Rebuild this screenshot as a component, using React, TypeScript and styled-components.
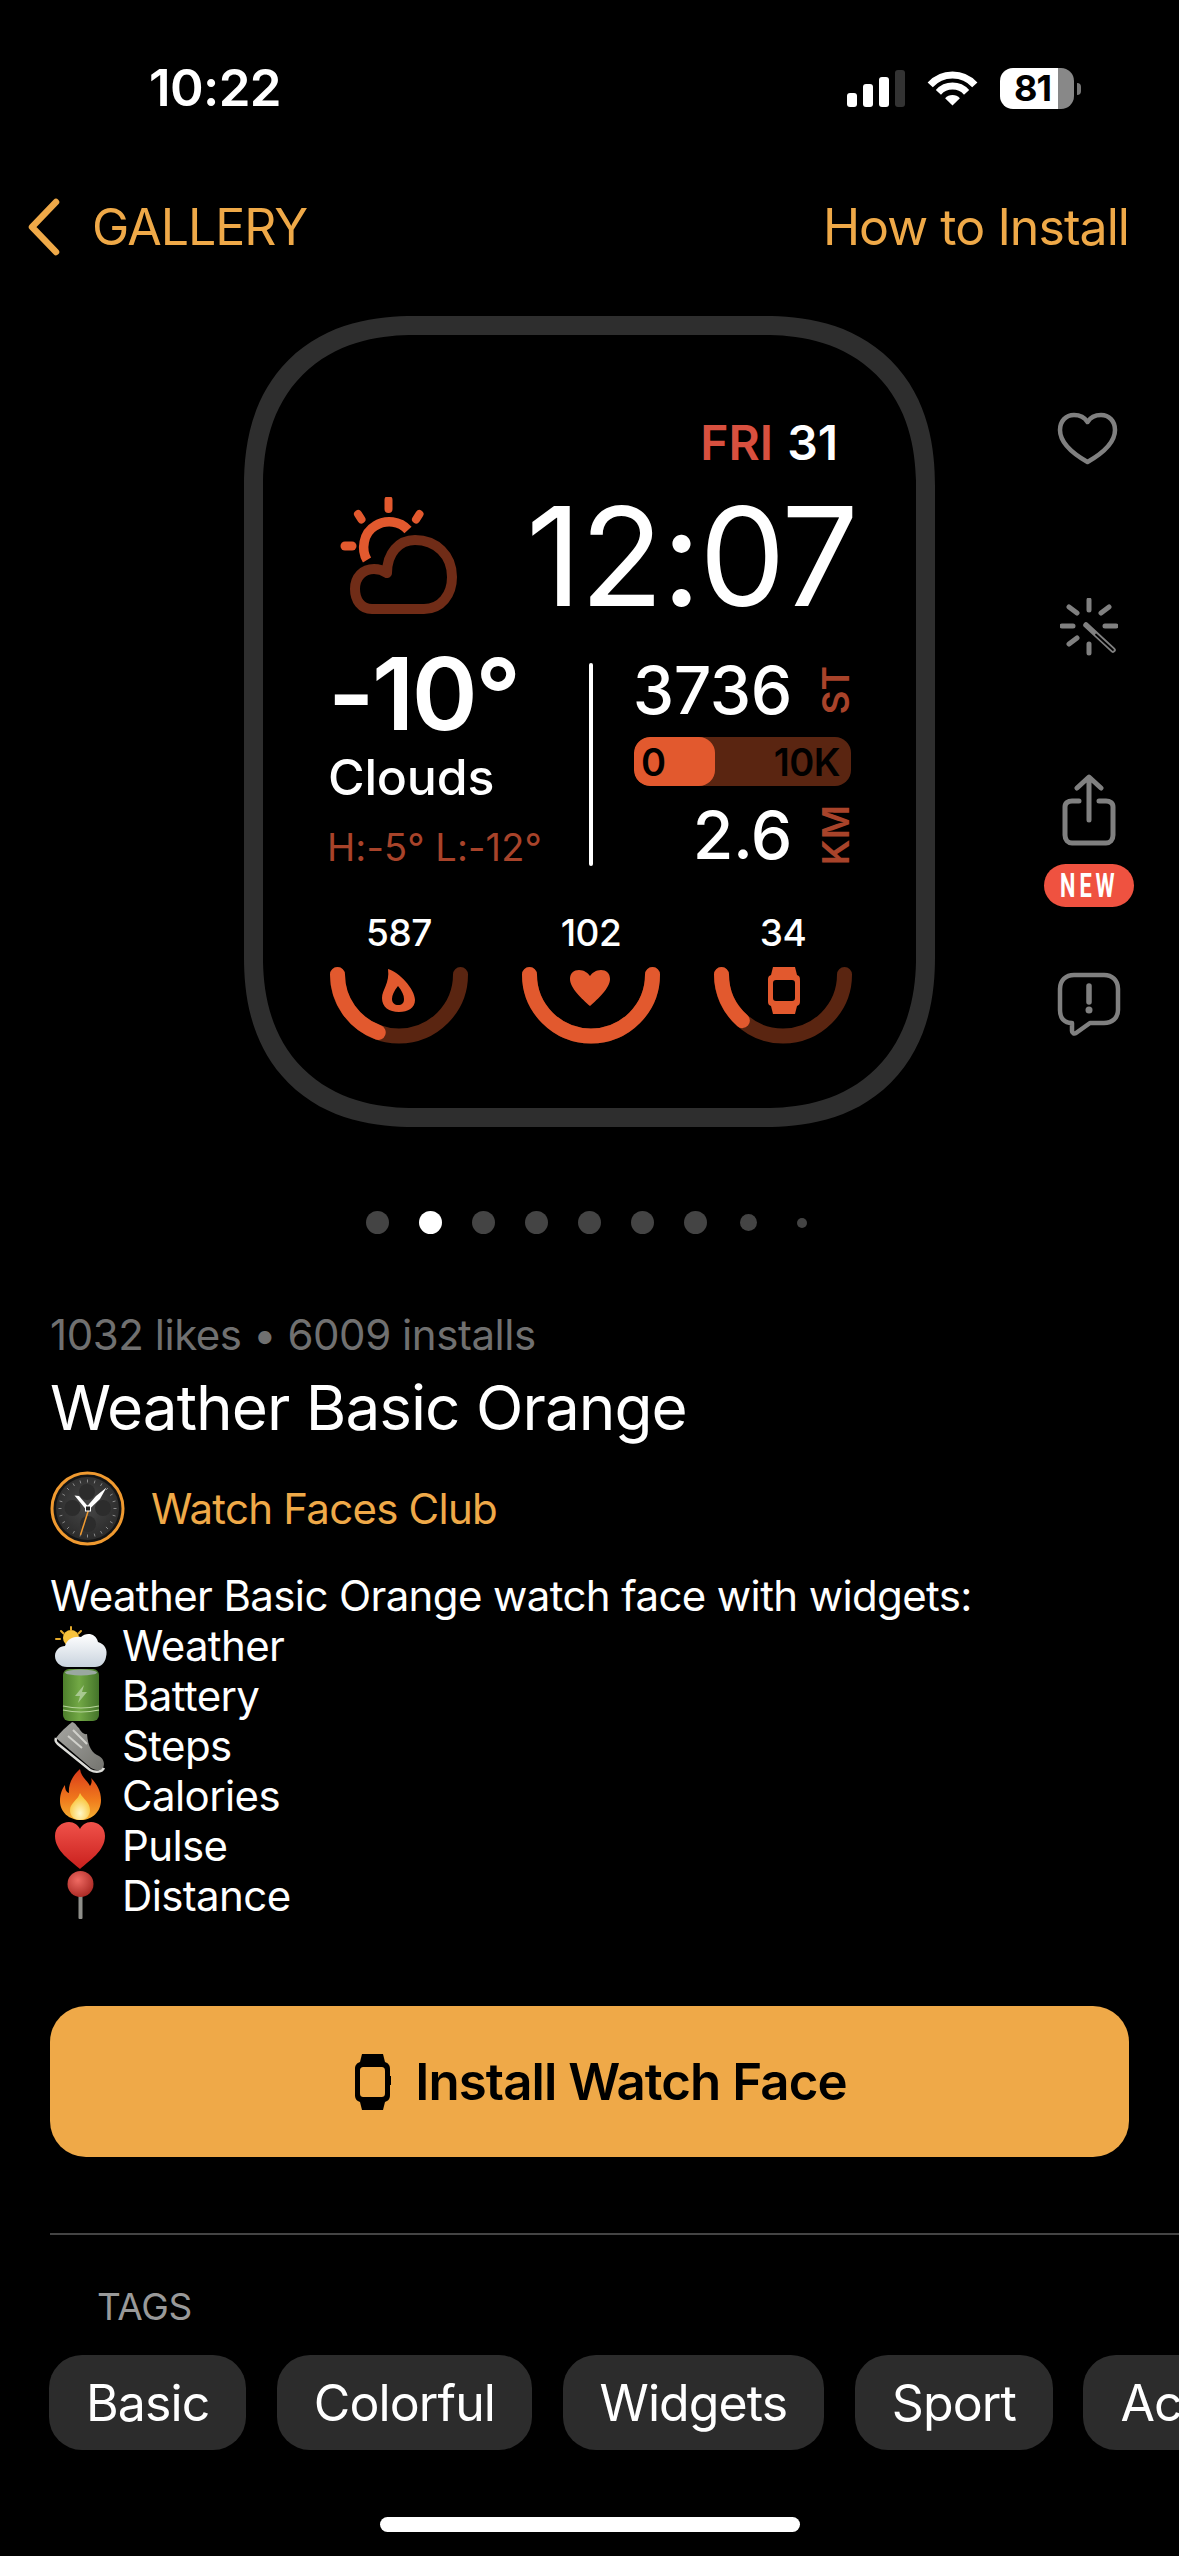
import * as React from "react";
import styled, { createGlobalStyle } from "styled-components";

const FONT = `Inter, "Liberation Sans", sans-serif`;
const ORANGE = "#efa948";
const EMBER = "#e2592e";
const EMBER_DARK = "#5a2511";
const RUST = "#a8432a";
const ICON_GREY = "#808080";

const Global = createGlobalStyle`
  html, body {
    margin: 0;
    background: #000;
  }
  * {
    box-sizing: border-box;
  }
`;

const Page = styled.div`
  width: 1179px;
  height: 2556px;
  background: #000;
  color: #fff;
  font-family: ${FONT};
  overflow: hidden;
  display: flex;
  flex-direction: column;
`;

const StatusBar = styled.div`
  height: 176px;
  flex: none;
  display: flex;
  align-items: center;
  justify-content: space-between;
  padding: 0 105px 0 149px;
`;
const Clock = styled.div`
  font-size: 51px;
  font-weight: 600;
  letter-spacing: -0.6px;
  line-height: 60px;
`;
const StatusIcons = styled.div`
  display: flex;
  align-items: center;
  gap: 22px;
`;
const Signal = styled.div`
  display: flex;
  align-items: flex-end;
  gap: 6px;
  height: 38px;
`;
const SignalBar = styled.div<{ $h: number; $off?: boolean }>`
  width: 10px;
  height: ${(p) => p.$h}px;
  border-radius: 3px;
  background: ${(p) => (p.$off ? "#333" : "#fff")};
`;
const Battery = styled.div`
  position: relative;
  width: 74px;
  height: 41px;
  border-radius: 13px;
  background: linear-gradient(90deg, #fff 0 78%, #888 78% 100%);
  color: #000;
  font-size: 36px;
  font-weight: 700;
  letter-spacing: -1px;
  line-height: 41px;
  padding-left: 14px;
  &::after {
    content: "";
    position: absolute;
    left: 77px;
    top: 15px;
    width: 4px;
    height: 12px;
    border-radius: 0 4px 4px 0;
    background: #777;
  }
`;

const NavBar = styled.div`
  height: 102px;
  flex: none;
  display: flex;
  align-items: center;
  justify-content: space-between;
  padding: 0 50px 0 28px;
  color: ${ORANGE};
  font-size: 50px;
  line-height: 60px;
`;
const BackLink = styled.div`
  display: flex;
  align-items: center;
  gap: 32px;
  letter-spacing: -1px;
`;
const NavLink = styled.div`
  letter-spacing: -0.95px;
`;

const Hero = styled.div`
  flex: none;
  margin-top: 38px;
  display: grid;
  grid-template-columns: 244px 691px 1fr;
`;
const WatchFrame = styled.div`
  grid-column: 2;
  height: 811px;
  border: 19px solid #2e2e2e;
  border-radius: 170px;
  corner-shape: superellipse(1.2);
  padding: 84px 64px 0 67px;
  display: flex;
  flex-direction: column;
`;
const DateRow = styled.div`
  display: flex;
  justify-content: flex-end;
  gap: 14px;
  padding-right: 14px;
  font-size: 48px;
  font-weight: 600;
  line-height: 48px;
`;
const DayName = styled.span`
  color: #d8503f;
`;
const TimeRow = styled.div`
  margin-top: 29px;
  margin-right: -5px;
  height: 120px;
  display: flex;
  align-items: center;
  justify-content: space-between;
  padding-left: 10px;
`;
const WatchTime = styled.div`
  font-size: 137px;
  font-weight: 400;
  line-height: 120px;
  letter-spacing: -1.8px;
`;
const StatsRow = styled.div`
  margin-top: 28px;
  display: flex;
  align-items: flex-start;
`;
const WeatherCol = styled.div`
  width: 259px;
  flex: none;
  display: flex;
  flex-direction: column;
`;
const Temp = styled.div`
  margin-left: -2px;
  font-size: 100px;
  font-weight: 600;
  line-height: 100px;
  letter-spacing: -2.5px;
`;
const Condition = styled.div`
  margin: 8px 0 0 -2px;
  font-size: 50px;
  font-weight: 500;
  line-height: 50px;
  letter-spacing: -0.2px;
`;
const HighLow = styled.div`
  margin: 25px 0 0 -3px;
  font-size: 38px;
  line-height: 40px;
  color: ${RUST};
  letter-spacing: 0.1px;
  white-space: nowrap;
`;
const Divider = styled.div`
  margin-top: 19px;
  width: 4px;
  height: 203px;
  border-radius: 2px;
  background: #fff;
  flex: none;
`;
const ActivityCol = styled.div`
  margin-left: 41px;
  width: 217px;
  flex: none;
  padding-top: 16px;
  display: flex;
  flex-direction: column;
`;
const MetricRow = styled.div`
  display: flex;
  justify-content: flex-end;
  align-items: center;
  gap: 30px;
  height: 60px;
  padding-right: 2px;
`;
const MetricValue = styled.div`
  font-size: 66px;
  font-weight: 500;
  line-height: 60px;
  letter-spacing: -0.4px;
`;
const MetricUnit = styled.div`
  writing-mode: vertical-rl;
  transform: rotate(180deg);
  font-size: 37px;
  font-weight: 600;
  line-height: 27px;
  width: 27px;
  text-align: center;
  color: ${RUST};
`;
const StepBar = styled.div`
  margin: 17px 0 19px;
  height: 49px;
  border-radius: 16px;
  background: ${EMBER_DARK};
  position: relative;
  overflow: hidden;
  display: flex;
  align-items: center;
  justify-content: space-between;
  padding: 0 11px 0 7px;
  color: #000;
  font-size: 38px;
  font-weight: 600;
  letter-spacing: -0.5px;
`;
const StepFill = styled.div`
  position: absolute;
  left: 0;
  top: 0;
  bottom: 0;
  border-radius: 16px;
  background: ${EMBER};
`;
const StepLabel = styled.span`
  position: relative;
`;
const GaugeRow = styled.div`
  margin-top: 46px;
  display: flex;
  gap: 54px;
`;
const GaugeCell = styled.div`
  width: 138px;
  flex: none;
  display: flex;
  flex-direction: column;
  align-items: center;
  gap: 14px;
`;
const GaugeLabel = styled.div`
  font-size: 37px;
  font-weight: 500;
  line-height: 40px;
  letter-spacing: -0.5px;
`;

const SideRail = styled.div`
  position: relative;
`;
const RailButton = styled.div<{ $x: number; $y: number }>`
  position: absolute;
  left: ${(p) => p.$x}px;
  top: ${(p) => p.$y}px;
  display: flex;
`;
const NewPill = styled.div`
  position: absolute;
  left: 109px;
  top: 547.5px;
  width: 90px;
  height: 43px;
  border-radius: 22px;
  background: #ef5240;
  display: flex;
  align-items: center;
  justify-content: center;
`;
const NewLabel = styled.span`
  color: #fff;
  font-family: Roboto, sans-serif;
  font-size: 33px;
  font-weight: 700;
  letter-spacing: 6px;
  line-height: 43px;
  white-space: nowrap;
  transform: scaleX(0.66);
`;

const Dots = styled.div`
  flex: none;
  margin-top: 84px;
  height: 23px;
  display: flex;
  justify-content: center;
  gap: 30px;
`;
const DotSlot = styled.div`
  width: 23px;
  height: 23px;
  display: flex;
  align-items: center;
  justify-content: center;
`;
const Dot = styled.div<{ $size: number; $active?: boolean }>`
  width: ${(p) => p.$size}px;
  height: ${(p) => p.$size}px;
  border-radius: 50%;
  background: ${(p) => (p.$active ? "#fff" : "#444")};
`;

const Details = styled.div`
  flex: none;
  padding: 0 50px;
  display: flex;
  flex-direction: column;
`;
const Meta = styled.div`
  margin-top: 76px;
  font-size: 42px;
  line-height: 50px;
  color: #707070;
  letter-spacing: -0.45px;
`;
const Title = styled.div`
  margin-top: 13px;
  font-size: 62px;
  line-height: 70px;
  letter-spacing: -0.95px;
`;
const Author = styled.div`
  margin-top: 28px;
  height: 75px;
  display: flex;
  align-items: center;
  gap: 26px;
  color: ${ORANGE};
  font-size: 42px;
  letter-spacing: -0.75px;
  line-height: 72px;
`;
const Description = styled.div`
  margin-top: 25px;
  font-size: 42px;
  line-height: 50px;
  letter-spacing: -0.62px;
`;
const FeatureRow = styled.div`
  display: flex;
  align-items: center;
  height: 50px;
  gap: 17px;
`;
const EmojiBox = styled.svg`
  width: 55px;
  height: 52px;
  margin-top: 2px;
  flex: none;
  overflow: visible;
`;
const InstallButton = styled.div`
  margin-top: 85px;
  height: 151px;
  border-radius: 36px;
  background: ${ORANGE};
  color: #000;
  display: flex;
  align-items: center;
  justify-content: center;
  gap: 24px;
  padding-left: 22px;
  font-size: 51px;
  font-weight: 600;
  letter-spacing: -0.95px;
`;
const Rule = styled.div`
  flex: none;
  margin: 76px 0 0 50px;
  height: 2px;
  background: #444;
`;
const TagsHeading = styled.div`
  flex: none;
  margin: 52px 0 0 97px;
  font-size: 37px;
  line-height: 40px;
  color: #999;
  letter-spacing: -0.4px;
`;
const TagList = styled.div`
  flex: none;
  margin-top: 28px;
  padding-left: 49px;
  display: flex;
  gap: 30.5px;
  white-space: nowrap;
`;
const Tag = styled.div`
  flex: none;
  height: 95px;
  border-radius: 33px;
  padding: 0 37px;
  background: #2c2c2c;
  display: flex;
  align-items: center;
  font-size: 50px;
  letter-spacing: -0.9px;
`;
const HomeBar = styled.div`
  flex: none;
  align-self: center;
  margin-top: 67px;
  width: 420px;
  height: 15px;
  border-radius: 8px;
  background: #fff;
`;

function WeatherGlyph() {
  return (
    <svg width="118" height="118" viewBox="340 497 118 118" fill="none" strokeLinecap="round">
      <path d="M367 560C361 550 363 533 375 526C386 519 400 521 408 530" stroke={EMBER} strokeWidth="9.5" strokeLinecap="butt" />
      <path d="M388.500 500V509" stroke={EMBER} strokeWidth="8" />
      <path d="M358 514L361.500 519.500M419.500 514L416 519.500" stroke={EMBER} strokeWidth="8" />
      <path d="M345 546H352" stroke={EMBER} strokeWidth="9" />
      <path
        d="M372 609C361 609 355 600 355 589C355 577 363 569 374 569C379 569 384 571 387 573C387 553 399 540 415 540C436 540 452 555 452 577C452 595 441 609 424 609Z"
        stroke="#702c17"
        strokeWidth="10"
        strokeLinejoin="round"
      />
    </svg>
  );
}

function Gauge({ value, icon }: { value: number; icon: React.ReactNode }) {
  const arc = "M7.500 7.500A61.500 61.500 0 0 0 130.500 7.500";
  return (
    <svg width="138" height="78" viewBox="0 0 138 78" fill="none">
      <path d={arc} stroke={EMBER_DARK} strokeWidth="15" strokeLinecap="round" />
      <path d={arc} stroke={EMBER} strokeWidth="15" strokeLinecap="round" pathLength={100} strokeDasharray={`${value} 200`} />
      {icon}
    </svg>
  );
}

const FlameIcon = (
  <path
    fill={EMBER}
    fillRule="evenodd"
    d="M58 2C69 5 85 22 85 33C85 41 78 45 69 45C59 45 52 40 52 31C52 23 60 16 58 2ZM68 19C64 24 62 28 62 32C62 36 65 38 68 38C72 38 74 36 74 32C74 28 72 24 68 19Z"
  />
);
const HeartIcon = (
  <path
    fill={EMBER}
    d="M68 39C60 32 48 21 48 12C48 6 52 3 57 3C62 3 66 6 68 9C70 6 74 3 79 3C84 3 88 6 88 12C88 21 76 32 68 39Z"
  />
);
const WatchIcon = (
  <path
    fill={EMBER}
    fillRule="evenodd"
    d="M59 0H81L83 8C86 9 86 11 86 14V33C86 36 86 38 83 39L81 47H59L57 39C54 38 54 36 54 33V14C54 11 54 9 57 8ZM62 13C60 13 59 14 59 16V31C59 33 60 34 62 34H78C80 34 81 33 81 31V16C81 14 80 13 78 13Z"
  />
);

function Emoji({ children }: { children: React.ReactNode }) {
  return <EmojiBox viewBox="-5 0 55 52">{children}</EmojiBox>;
}

function CloudEmoji() {
  return (
    <Emoji>
      <defs>
        <linearGradient id="cloudFill" x1="0" y1="0" x2="0" y2="1">
          <stop offset="0" stopColor="#fff" />
          <stop offset="1" stopColor="#c9d3de" />
        </linearGradient>
      </defs>
      <circle cx="16" cy="17" r="8" fill="#f7c23c" />
      <path d="M16 6V9M6 10L8.500 12.500M26 10L23.500 12.500M1 18H5" stroke="#e3a92c" strokeWidth="2" strokeLinecap="round" />
      <path
        fill="url(#cloudFill)"
        d="M12 46C5 46 0 41 0 35C0 29 5 25 10 25C12 18 19 15 26 16C31 11 41 12 43 21C50 23 53 29 51 36C50 42 46 46 40 46Z"
      />
    </Emoji>
  );
}

function BatteryEmoji() {
  return (
    <Emoji>
      <defs>
        <linearGradient id="cellFill" x1="0" y1="0" x2="1" y2="0">
          <stop offset="0" stopColor="#4d7f2c" />
          <stop offset="0.45" stopColor="#72a845" />
          <stop offset="1" stopColor="#44742a" />
        </linearGradient>
      </defs>
      <rect x="8" y="-2" width="36" height="52" rx="6" fill="url(#cellFill)" />
      <ellipse cx="26" cy="1.500" rx="16" ry="3" fill="#9aa8a0" />
      <path d="M8 35Q26 39 44 35M8 39Q26 43 44 39" stroke="#b6d49a" strokeWidth="1.200" fill="none" />
      <path d="M29 14L20 25H25L23 32L32 21H27Z" fill="#a8c890" />
    </Emoji>
  );
}

function ShoeEmoji() {
  return (
    <Emoji>
      <defs>
        <linearGradient id="shoeFill" x1="0" y1="0" x2="1" y2="1">
          <stop offset="0" stopColor="#a6a6a2" />
          <stop offset="1" stopColor="#74746f" />
        </linearGradient>
      </defs>
      <path fill="url(#shoeFill)" d="M17 1C14 4 9 7 1 17L36 47C42 50 46 50 48 47C50 43 49 38 44 35C37 32 33 26 32 13C29 14 25 10 24 7C22 6 21 2 17 1Z" />
      <path d="M1 17C0 20 1 21 3 23L35 49C41 52 47 51 49 47" stroke="#dcdcd8" strokeWidth="2.500" fill="none" />
      <path d="M13 15L27 27M18 9L32 23" stroke="#d0d0cb" strokeWidth="2" />
    </Emoji>
  );
}

function FireEmoji() {
  return (
    <Emoji>
      <defs>
        <linearGradient id="fireFill" x1="0" y1="0" x2="0" y2="1">
          <stop offset="0" stopColor="#d9391a" />
          <stop offset="0.6" stopColor="#f07a1c" />
          <stop offset="1" stopColor="#f6b233" />
        </linearGradient>
        <radialGradient id="fireCore" cx="0.5" cy="0.75" r="0.6">
          <stop offset="0" stopColor="#fff8c8" />
          <stop offset="1" stopColor="#f9c53c" />
        </radialGradient>
      </defs>
      <g transform="translate(-1 -2)">
        <path
          fill="url(#fireFill)"
          d="M26 0C27 8 33 11 36 17C38 14 38 11 37 9C43 15 47 22 47 31C47 43 38 51 27 51C15 51 6 43 6 32C6 25 8 20 11 16C11 20 12 23 15 24C14 15 19 6 26 0Z"
        />
        <path fill="url(#fireCore)" d="M26 24C29 30 36 33 36 41C36 47 32 51 26 51C20 51 16 47 16 41C16 34 24 31 26 24Z" />
      </g>
    </Emoji>
  );
}

function HeartEmoji() {
  return (
    <Emoji>
      <defs>
        <linearGradient id="heartFill" x1="0" y1="0" x2="0" y2="1">
          <stop offset="0" stopColor="#f0524a" />
          <stop offset="1" stopColor="#c9201d" />
        </linearGradient>
      </defs>
      <path
        fill="url(#heartFill)"
        d="M25 48C16 40 0 30 0 15C0 6 7 1 14 1C19 1 23 4 25 8C27 4 31 1 36 1C43 1 50 6 50 15C50 30 34 40 25 48Z"
      />
    </Emoji>
  );
}

function PinEmoji() {
  return (
    <Emoji>
      <defs>
        <radialGradient id="pinFill" cx="0.4" cy="0.35" r="0.7">
          <stop offset="0" stopColor="#ef6a62" />
          <stop offset="1" stopColor="#a82722" />
        </radialGradient>
      </defs>
      <rect x="23.500" y="22" width="4" height="26" rx="1" fill="#8f8f8a" />
      <circle cx="25.500" cy="13" r="13" fill="url(#pinFill)" />
    </Emoji>
  );
}

const avatarTicks = Array.from({ length: 24 }, (_, i) => (i * Math.PI * 2) / 24);

function AuthorAvatar() {
  return (
    <svg width="75" height="75" viewBox="0 0 75 75">
      <defs>
        <radialGradient id="faceFill" cx="0.5" cy="0.45" r="0.55">
          <stop offset="0" stopColor="#484848" />
          <stop offset="1" stopColor="#2b2b2b" />
        </radialGradient>
      </defs>
      <circle cx="37.500" cy="37.500" r="35.500" fill="#141414" stroke="#f09a30" strokeWidth="3" />
      <circle cx="37.500" cy="37.500" r="31.500" fill="url(#faceFill)" />
      <circle cx="37" cy="21" r="8" fill="#2c2c2c" />
      <circle cx="22.500" cy="37" r="8" fill="#2c2c2c" />
      <circle cx="53" cy="37" r="8" fill="#2c2c2c" />
      <circle cx="38" cy="53" r="8" fill="#2c2c2c" />
      {avatarTicks.map((a) => (
        <line
          key={a}
          x1={37.5 + Math.cos(a) * 26}
          y1={37.5 + Math.sin(a) * 26}
          x2={37.5 + Math.cos(a) * 29}
          y2={37.5 + Math.sin(a) * 29}
          stroke="#8a8a8a"
          strokeWidth="1"
        />
      ))}
      <polygon points="24.500,24.500 29,25 38.500,36 36,38.500" fill="#fff" />
      <polygon points="56.500,16.500 50,28 39,38.500 36.500,36 46,25" fill="#fff" />
      <path d="M38.500 39L30.500 64" stroke="#f09a30" strokeWidth="1.500" />
      <rect x="35.500" y="35" width="5" height="5" fill="#222" stroke="#fff" strokeWidth="1" />
    </svg>
  );
}

const tags = ["Basic", "Colorful", "Widgets", "Sport", "Activity"];
const features: [string, React.ReactNode][] = [
  ["Weather", <CloudEmoji />],
  ["Battery", <BatteryEmoji />],
  ["Steps", <ShoeEmoji />],
  ["Calories", <FireEmoji />],
  ["Pulse", <HeartEmoji />],
  ["Distance", <PinEmoji />],
];
const dotSizes = [23, 23, 23, 23, 23, 23, 23, 17, 10];

function App() {
  return (
    <Page>
      <Global />
      <StatusBar>
        <Clock>10:22</Clock>
        <StatusIcons>
          <Signal>
            <SignalBar $h={14} />
            <SignalBar $h={23} />
            <SignalBar $h={30} />
            <SignalBar $h={37} $off />
          </Signal>
          <svg width="51" height="38" viewBox="0 0 51 38" fill="none">
            <path d="M3.200 15.900A30 30 0 0 1 47.800 15.900" stroke="#fff" strokeWidth="7" />
            <path d="M11.400 23.300A19 19 0 0 1 39.600 23.300" stroke="#fff" strokeWidth="7" />
            <path d="M25.500 36.500L18.100 29.300A10 10 0 0 1 32.900 29.300Z" fill="#fff" />
          </svg>
          <Battery>81</Battery>
        </StatusIcons>
      </StatusBar>

      <NavBar>
        <BackLink>
          <svg width="32" height="58" viewBox="0 0 32 58" fill="none">
            <path d="M28 4L4 29L28 54" stroke={ORANGE} strokeWidth="6.500" strokeLinecap="round" strokeLinejoin="round" />
          </svg>
          GALLERY
        </BackLink>
        <NavLink>How to Install</NavLink>
      </NavBar>

      <Hero>
        <WatchFrame>
          <DateRow>
            <DayName>FRI</DayName>
            <span>31</span>
          </DateRow>
          <TimeRow>
            <WeatherGlyph />
            <WatchTime>12:07</WatchTime>
          </TimeRow>
          <StatsRow>
            <WeatherCol>
              <Temp>-10°</Temp>
              <Condition>Clouds</Condition>
              <HighLow>H:-5° L:-12°</HighLow>
            </WeatherCol>
            <Divider />
            <ActivityCol>
              <MetricRow>
                <MetricValue>3736</MetricValue>
                <MetricUnit>ST</MetricUnit>
              </MetricRow>
              <StepBar>
                <StepFill style={{ width: `${(3736 / 10000) * 100}%` }} />
                <StepLabel>0</StepLabel>
                <StepLabel>10K</StepLabel>
              </StepBar>
              <MetricRow>
                <MetricValue>2.6</MetricValue>
                <MetricUnit>KM</MetricUnit>
              </MetricRow>
            </ActivityCol>
          </StatsRow>
          <GaugeRow>
            <GaugeCell>
              <GaugeLabel>587</GaugeLabel>
              <Gauge value={39} icon={FlameIcon} />
            </GaugeCell>
            <GaugeCell>
              <GaugeLabel>102</GaugeLabel>
              <Gauge value={100} icon={HeartIcon} />
            </GaugeCell>
            <GaugeCell>
              <GaugeLabel>34</GaugeLabel>
              <Gauge value={27} icon={WatchIcon} />
            </GaugeCell>
          </GaugeRow>
        </WatchFrame>

        <SideRail>
          <RailButton $x={122} $y={96}>
            <svg width="61" height="53" viewBox="0 0 61 53" fill="none" stroke={ICON_GREY} strokeWidth="4.500" strokeLinejoin="round">
              <path d="M30.500 50C20 44 3 33 3 18C3 9 9 3 17 3C23 3 28 6 30.500 10C33 6 38 3 44 3C52 3 58 9 58 18C58 33 41 44 30.500 50Z" />
            </svg>
          </RailButton>
          <RailButton $x={125} $y={282}>
            <svg width="58" height="58" viewBox="0 0 58 58" fill="none" stroke={ICON_GREY} strokeLinecap="round">
              <path d="M29 2V12M29 46V55M2 28H13M45 28H56M9 9L17 15M49 9L41 15M9 46L17 40" strokeWidth="5" />
              <path d="M26 27L53 52" strokeWidth="5.500" />
              <path d="M36 36.500L53 52" stroke="#000" strokeWidth="1.800" />
            </svg>
          </RailButton>
          <RailButton $x={127} $y={458}>
            <svg width="54" height="72" viewBox="0 0 54 72" fill="none" stroke={ICON_GREY} strokeWidth="5" strokeLinecap="round" strokeLinejoin="round">
              <path d="M17 27H10C6 27 3 29 3 33V61C3 66 6 69 10 69H44C48 69 51 66 51 61V33C51 29 48 27 44 27H37" />
              <path d="M27 46V4M15 14L27 3L39 14" />
            </svg>
          </RailButton>
          <NewPill>
            <NewLabel>NEW</NewLabel>
          </NewPill>
          <RailButton $x={122} $y={656}>
            <svg width="64" height="64" viewBox="0 0 64 64" fill="none" stroke={ICON_GREY} strokeWidth="4.500" strokeLinejoin="round">
              <path d="M17 3H47C55 3 61 8 61 17V38C61 46 55 51 47 51H33L19 61C17 62 15 61 15 59V51C7 51 3 46 3 38V17C3 8 9 3 17 3Z" />
              <path d="M32 14V30" strokeWidth="5.500" strokeLinecap="round" />
              <circle cx="32" cy="38" r="3.500" fill={ICON_GREY} stroke="none" />
            </svg>
          </RailButton>
        </SideRail>
      </Hero>

      <Dots>
        {dotSizes.map((size, i) => (
          <DotSlot key={i}>
            <Dot $size={size} $active={i === 1} />
          </DotSlot>
        ))}
      </Dots>

      <Details>
        <Meta>1032 likes • 6009 installs</Meta>
        <Title>Weather Basic Orange</Title>
        <Author>
          <AuthorAvatar />
          Watch Faces Club
        </Author>
        <Description>
          <div>Weather Basic Orange watch face with widgets:</div>
          {features.map(([label, icon]) => (
            <FeatureRow key={label}>
              {icon}
              <span>{label}</span>
            </FeatureRow>
          ))}
        </Description>
        <InstallButton>
          <svg width="37" height="56" viewBox="0 0 37 56" fill="#000" fillRule="evenodd">
            <path d="M8 0H29L31 8C34 9 36 11 36 15V22H37V31H36V41C36 45 34 47 31 48L29 56H8L6 48C3 47 1 45 1 41V15C1 11 3 9 6 8ZM10 13C7 13 6 14 6 17V39C6 42 7 43 10 43H27C30 43 31 42 31 39V17C31 14 30 13 27 13Z" />
          </svg>
          Install Watch Face
        </InstallButton>
      </Details>

      <Rule />
      <TagsHeading>TAGS</TagsHeading>
      <TagList>
        {tags.map((tag) => (
          <Tag key={tag}>{tag}</Tag>
        ))}
      </TagList>
      <HomeBar />
    </Page>
  );
}

export default App;
